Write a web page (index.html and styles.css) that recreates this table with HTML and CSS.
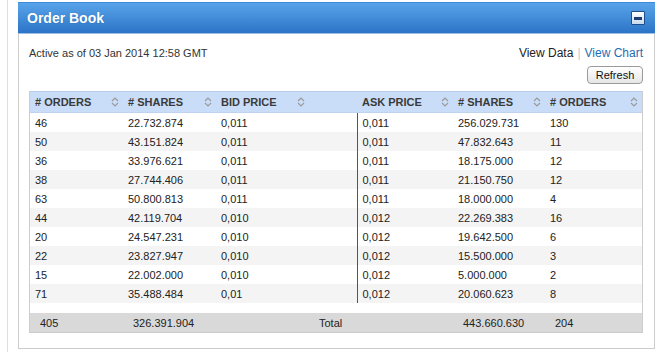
FILE: index.html
```html
<!DOCTYPE html>
<html>
<head>
<meta charset="utf-8">
<link rel="stylesheet" href="styles.css">
</head>
<body>
<div class="rail">
  <div class="panel">
    <div class="panel-head">
      <span class="panel-title">Order Book</span>
      <span class="min-btn"><span class="min-bar"></span></span>
    </div>
    <div class="panel-body">
      <div class="meta-row">
        <span class="meta">Active as of 03 Jan 2014 12:58 GMT</span>
        <span class="views"><span class="view-data">View Data</span><span class="sep">|</span><a class="view-chart">View Chart</a></span>
      </div>
      <div class="actions"><button class="refresh">Refresh</button></div>
      <div class="book">
        <table class="book-table">
          <colgroup>
            <col class="c93"><col class="c93"><col class="c93"><col class="c48"><col class="c96"><col class="c92"><col class="c97">
          </colgroup>
          <thead>
            <tr>
              <th><div class="th-in"><span># ORDERS</span><svg class="sort" viewBox="0 0 8 10" width="8" height="10"><polyline points="1,4 4,1 7,4"/><polyline points="1,6 4,9 7,6"/></svg></div></th>
              <th><div class="th-in"><span># SHARES</span><svg class="sort" viewBox="0 0 8 10" width="8" height="10"><polyline points="1,4 4,1 7,4"/><polyline points="1,6 4,9 7,6"/></svg></div></th>
              <th><div class="th-in"><span>BID PRICE</span><svg class="sort" viewBox="0 0 8 10" width="8" height="10"><polyline points="1,4 4,1 7,4"/><polyline points="1,6 4,9 7,6"/></svg></div></th>
              <th></th>
              <th><div class="th-in"><span>ASK PRICE</span><svg class="sort" viewBox="0 0 8 10" width="8" height="10"><polyline points="1,4 4,1 7,4"/><polyline points="1,6 4,9 7,6"/></svg></div></th>
              <th><div class="th-in"><span># SHARES</span><svg class="sort" viewBox="0 0 8 10" width="8" height="10"><polyline points="1,4 4,1 7,4"/><polyline points="1,6 4,9 7,6"/></svg></div></th>
              <th><div class="th-in"><span># ORDERS</span><svg class="sort" viewBox="0 0 8 10" width="8" height="10"><polyline points="1,4 4,1 7,4"/><polyline points="1,6 4,9 7,6"/></svg></div></th>
            </tr>
          </thead>
          <tbody>
            <tr><td>46</td><td>22.732.874</td><td>0,011</td><td></td><td class="ask">0,011</td><td>256.029.731</td><td>130</td></tr>
            <tr><td>50</td><td>43.151.824</td><td>0,011</td><td></td><td class="ask">0,011</td><td>47.832.643</td><td>11</td></tr>
            <tr><td>36</td><td>33.976.621</td><td>0,011</td><td></td><td class="ask">0,011</td><td>18.175.000</td><td>12</td></tr>
            <tr><td>38</td><td>27.744.406</td><td>0,011</td><td></td><td class="ask">0,011</td><td>21.150.750</td><td>12</td></tr>
            <tr><td>63</td><td>50.800.813</td><td>0,011</td><td></td><td class="ask">0,011</td><td>18.000.000</td><td>4</td></tr>
            <tr><td>44</td><td>42.119.704</td><td>0,010</td><td></td><td class="ask">0,012</td><td>22.269.383</td><td>16</td></tr>
            <tr><td>20</td><td>24.547.231</td><td>0,010</td><td></td><td class="ask">0,012</td><td>19.642.500</td><td>6</td></tr>
            <tr><td>22</td><td>23.827.947</td><td>0,010</td><td></td><td class="ask">0,012</td><td>15.500.000</td><td>3</td></tr>
            <tr><td>15</td><td>22.002.000</td><td>0,010</td><td></td><td class="ask">0,012</td><td>5.000.000</td><td>2</td></tr>
            <tr><td>71</td><td>35.488.484</td><td>0,01</td><td></td><td class="ask">0,012</td><td>20.060.623</td><td>8</td></tr>
          </tbody>
          <tfoot>
            <tr class="spacer"><td colspan="7"></td></tr>
            <tr class="total"><td>405</td><td>326.391.904</td><td></td><td>Total</td><td></td><td>443.660.630</td><td>204</td></tr>
          </tfoot>
        </table>
      </div>
    </div>
  </div>
</div>
</body>
</html>
```
FILE: styles.css
```css
html, body {
  margin: 0;
  padding: 0;
  background: #fff;
}
body {
  font-family: "Liberation Sans", Arial, sans-serif;
  color: #222;
  width: 664px;
  height: 352px;
  overflow: hidden;
}
.rail {
  margin-left: 7px;
  border-left: 1px solid #dedede;
  padding-left: 10px;
  padding-top: 2px;
  height: 350px;
}
.panel {
  width: 637px;
}
.panel-head {
  height: 32px;
  box-sizing: border-box;
  background: linear-gradient(#58a4ea, #2c74c7);
  border-top: 1px solid #3f8ad8;
  border-bottom: 1px solid #9fbfe0;
  display: flex;
  align-items: center;
  justify-content: space-between;
  padding: 0 10px 0 9px;
}
.panel-title {
  color: #fff;
  font-weight: bold;
  font-size: 14px;
  text-shadow: 0 0 1px rgba(0, 40, 100, 0.4);
}
.min-btn {
  width: 14px;
  height: 14px;
  box-sizing: border-box;
  border: 1px solid #1e4f8c;
  border-radius: 1px;
  background: linear-gradient(#ffffff, #c9d9ec);
  display: flex;
  align-items: center;
  justify-content: center;
}
.min-bar {
  width: 8px;
  height: 3px;
  background: #1c3d72;
}
.panel-body {
  border-left: 1px solid #cccccc;
  border-right: 1px solid #cccccc;
  border-bottom: 1px solid #cccccc;
  padding: 11px 11px 15px 10px;
}
.meta-row {
  display: flex;
  justify-content: space-between;
  align-items: center;
  height: 16px;
}
.meta {
  font-size: 11px;
  color: #333;
}
.views {
  font-size: 12px;
  color: #222;
}
.sep {
  color: #c8c8c8;
  margin: 0 4px;
}
.view-chart {
  color: #1f6db4;
}
.actions {
  display: flex;
  justify-content: flex-end;
  margin-top: 5px;
}
.refresh {
  font-family: "Liberation Sans", Arial, sans-serif;
  font-size: 11px;
  color: #111;
  height: 18px;
  width: 56px;
  padding: 0;
  border: 1px solid #9b9b9b;
  border-radius: 4px;
  background: linear-gradient(#ffffff, #e6e6e6);
}
.book {
  margin-top: 7px;
  border: 1px solid #cccccc;
  border-top-color: #b9cde8;
}
.book-table {
  width: 612px;
  table-layout: fixed;
  border-collapse: collapse;
  font-size: 11px;
}
.c93 { width: 93px; }
.c48 { width: 48px; }
.c96 { width: 96px; }
.c92 { width: 92px; }
.c97 { width: 97px; }
.book-table th {
  background: #c9ddf8;
  height: 20px;
  padding: 0;
  border-bottom: 1px solid #c0d3ee;
  text-align: left;
  font-weight: bold;
  color: #3a3a3a;
}
.th-in {
  display: flex;
  align-items: center;
  justify-content: space-between;
  padding: 0 4px 0 5px;
}
.sort {
  fill: none;
  stroke: #9a9a9a;
  stroke-width: 1.2;
}
.book-table td {
  height: 19px;
  padding: 0 0 0 5px;
  white-space: nowrap;
}
.book-table tbody tr:nth-child(even) td {
  background: #f4f4f4;
}
.book-table td.ask {
  border-left: 1px solid #555;
}
.book-table tr.spacer td {
  height: 10px;
  padding: 0;
  background: #fff;
}
.book-table tr.total td {
  background: #d9d9d9;
  height: 19px;
  padding-left: 10px;
  color: #222;
}
```
